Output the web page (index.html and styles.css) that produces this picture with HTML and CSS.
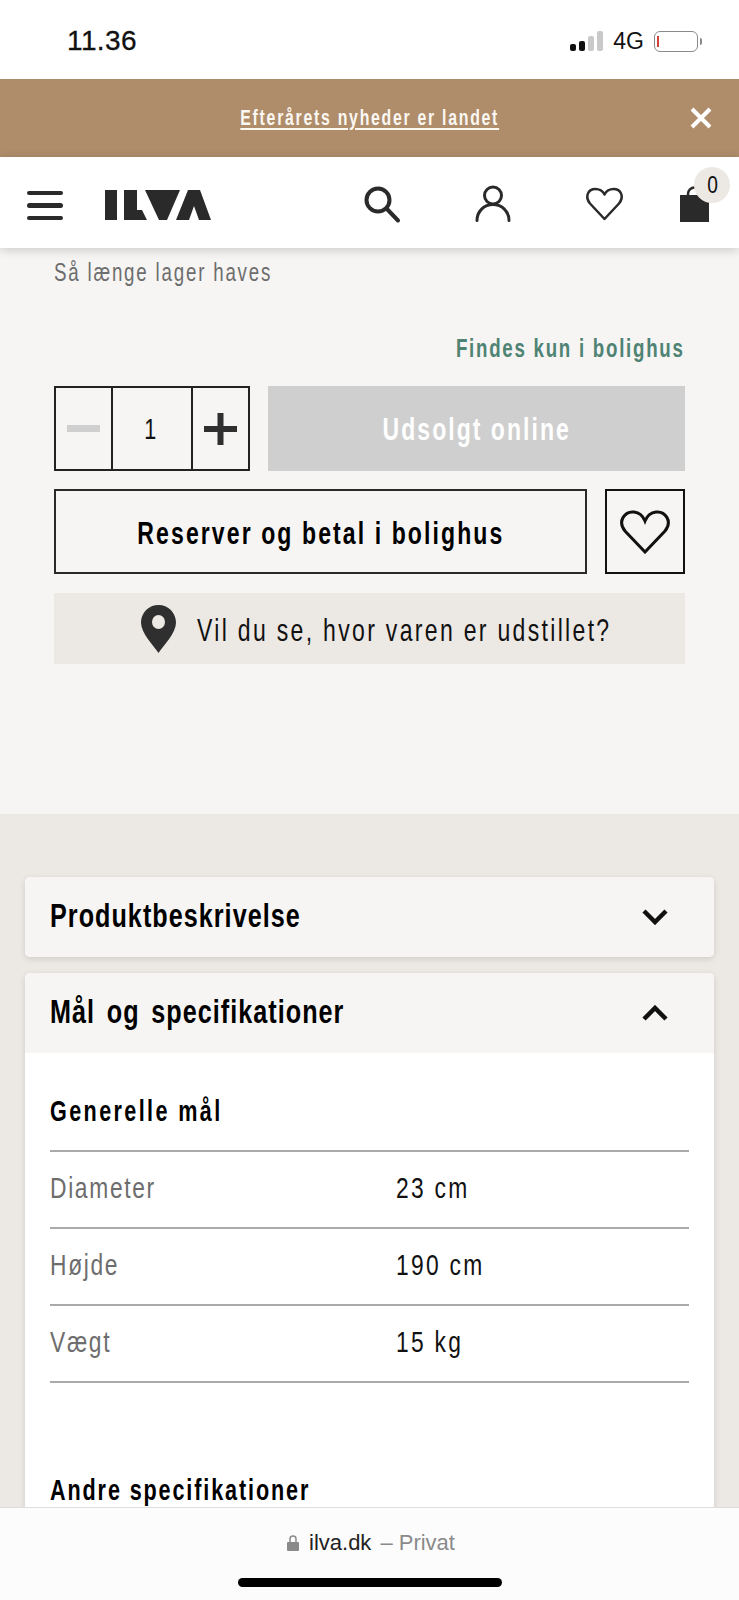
FILE: index.html
```html
<!DOCTYPE html>
<html lang="da">
<head>
<meta charset="utf-8">
<title>ILVA</title>
<link rel="stylesheet" href="styles.css">
</head>
<body>
<div class="page">
  <div class="status">
    <span class="time">11.36</span>
    <div class="status-right">
      <div class="signal"><i class="b1"></i><i class="b2"></i><i class="b3"></i><i class="b4"></i></div>
      <span class="net">4G</span>
      <div class="battery"><i class="level"></i></div>
      <i class="nub"></i>
    </div>
  </div>
  <div class="banner">
    <a class="banner-link cond">Efterårets nyheder er landet</a>
    <svg class="banner-close" viewBox="0 0 22 22"><path d="M2 2 20 20M20 2 2 20"/></svg>
  </div>
  <header class="header">
    <div class="burger"><i></i><i></i><i></i></div>
    <svg class="logo" viewBox="0 0 107 30"><path d="M0 0h12v30H0zM19 0h13v20h5l5 10H19zM40 0h35L62 30H54zM83 0h12l11 30H94L89 16 84 30H71z"/></svg>
    <div class="header-icons">
      <svg class="ic ic-search" viewBox="0 0 44 44"><circle cx="19" cy="18" r="11.500"/><path d="M27.500 26.500 39 38.500"/></svg>
      <svg class="ic ic-user" viewBox="0 0 44 44"><circle cx="22" cy="13.500" r="8.500"/><path d="M6 38.500c0-9 7-16 16-16s16 7 16 16"/></svg>
      <svg class="ic ic-heart" viewBox="0 0 44 44"><path d="M21.500 37 7 21.500C1.500 14.500 5 7 12.500 7c3.500 0 7.500 2 9 5.500C23 9 27 7 30.500 7 38 7 41.500 14.500 36 21.500z"/></svg>
      <div class="cart">
        <svg class="bag" viewBox="0 0 29 36"><path d="M0 9h29v27H0z"/><path class="bag-handle" d="M8 10V8a6.500 6.500 0 0 1 13 0v2"/></svg>
        <span class="badge"><span class="badge-num">0</span></span>
      </div>
    </div>
  </header>
  <main class="product">
    <p class="stock"><span class="cond cond-l">Så længe lager haves</span></p>
    <p class="only"><span class="cond cond-r">Findes kun i bolighus</span></p>
    <div class="row">
      <div class="qty">
        <div class="qty-btn qty-minus"><i></i></div>
        <div class="qty-val"><span class="cond">1</span></div>
        <div class="qty-btn qty-plus"><svg viewBox="0 0 33 32"><path d="M13.500 0h6v13h13.500v6H19.500v13h-6V19H0v-6h13.500z"/></svg></div>
      </div>
      <div class="soldout"><span class="cond">Udsolgt online</span></div>
    </div>
    <div class="row">
      <div class="reserve"><span class="cond">Reserver og betal i bolighus</span></div>
      <div class="wish"><svg viewBox="0 0 50 44"><path d="M25 42 5 21C-3 11 5 1 14 2c5 .500 9 4 11 9 2-5 6-8.500 11-9 9-1 17 9 9 19z"/></svg></div>
    </div>
    <div class="where">
      <svg class="pin" viewBox="0 0 35 48"><path fill-rule="evenodd" d="M17.500 0C7.800 0 0 7.800 0 17.500 0 28 12 40 17.500 48 23 40 35 28 35 17.500 35 7.800 27.200 0 17.500 0zm0 10a6.500 7 0 1 1 0 14 6.500 7 0 1 1 0-14z"/></svg>
      <span class="cond cond-l">Vil du se, hvor varen er udstillet?</span>
    </div>
  </main>
  <section class="details">
    <div class="card">
      <div class="card-head">
        <h2><span class="cond-h">Produktbeskrivelse</span></h2>
        <svg class="chev" viewBox="0 0 26 16"><path d="M2 2 13 13 24 2"/></svg>
      </div>
    </div>
    <div class="card">
      <div class="card-head">
        <h2><span class="cond-h">Mål og specifikationer</span></h2>
        <svg class="chev" viewBox="0 0 26 16"><path d="M2 14 13 3 24 14"/></svg>
      </div>
      <div class="card-body">
        <h3><span class="cond cond-l">Generelle mål</span></h3>
        <div class="spec"><span class="k cond-s">Diameter</span><span class="v cond-s">23 cm</span></div>
        <div class="spec"><span class="k cond-s">Højde</span><span class="v cond-s">190 cm</span></div>
        <div class="spec"><span class="k cond-s">Vægt</span><span class="v cond-s">15 kg</span></div>
        <h3 class="second"><span class="cond cond-l">Andre specifikationer</span></h3>
      </div>
    </div>
  </section>
  <div class="safari">
    <div class="address">
      <svg class="lock" viewBox="0 0 12 16"><path d="M1 7h10a1 1 0 0 1 1 1v7a1 1 0 0 1-1 1H1a1 1 0 0 1-1-1V8a1 1 0 0 1 1-1z"/><path class="shackle" d="M3 7V4a3 3 0 0 1 6 0v3"/></svg>
      <span class="host">ilva.dk</span>
      <span class="priv">– Privat</span>
    </div>
    <div class="home"></div>
  </div>
</div>
</body>
</html>
```
FILE: styles.css
```css
* { box-sizing: border-box; }
html, body { margin: 0; padding: 0; }
body { background: #f6f5f3; }
.page {
  position: relative; width: 739px; height: 1600px; overflow: hidden;
  font-family: "Liberation Sans", Arial, sans-serif;
  color: #111; background: #f6f5f3;
}
p, h2, h3 { margin: 0; }

/* The reference face is a condensed grotesque; squeeze the metric-compatible sans to match. */
.cond { display: inline-block; white-space: nowrap; transform: scaleX(.72); }
.cond-l { transform-origin: left center; }
.cond-r { transform-origin: right center; }
.cond-s { display: inline-block; white-space: nowrap; transform: scaleX(.76); transform-origin: left center; }
.cond-h { display: inline-block; white-space: nowrap; transform: scaleX(.74); transform-origin: left center; }

.status { height: 79px; background: #fff; display: flex; align-items: center; padding: 3px 37px 0 67px; justify-content: space-between; }
.time { font-size: 28px; letter-spacing: .4px; -webkit-text-stroke: .3px #111; }
.status-right { display: flex; align-items: center; }
.signal { display: flex; align-items: flex-end; gap: 3px; height: 20px; margin-right: 10px; }
.signal i { display: block; width: 6px; border-radius: 2px; background: #c9c9c9; }
.signal .b1 { height: 7px; background: #111; }
.signal .b2 { height: 10px; background: #111; }
.signal .b3 { height: 15px; }
.signal .b4 { height: 20px; }
.net { font-size: 23px; margin-right: 10px; }
.battery { width: 44px; height: 21px; border: 1.500px solid #8a8a8a; border-radius: 6px; padding: 4px 2px; }
.level { display: block; width: 2px; height: 100%; background: #d0423c; }
.nub { display: block; width: 2px; height: 7px; background: #888; margin-left: 2px; border-radius: 0 2px 2px 0; }

.banner { height: 78px; background: #af8d6b; display: flex; align-items: center; justify-content: center; position: relative; }
.banner-link { color: #fbf7f2; font-size: 22px; font-weight: 700; letter-spacing: 2.400px; text-decoration: underline; text-underline-offset: 3px; }
.banner-close { position: absolute; right: 27px; top: 28px; width: 22px; height: 22px; fill: none; stroke: #fff; stroke-width: 4; }

.header { position: relative; z-index: 2; height: 91px; background: #fff; box-shadow: 0 2px 10px rgba(0,0,0,.18); display: flex; align-items: center; padding-left: 27px; }
.burger { width: 36px; display: flex; flex-direction: column; gap: 8px; margin-top: 6px; }
.burger i { display: block; height: 4.500px; border-radius: 3px; background: #2a2a2a; }
.logo { width: 107px; height: 30px; margin: 5px 0 0 42px; fill: #2a2a2a; }
.header-icons { display: flex; align-items: center; margin-left: 146.500px; gap: 68px; margin-top: 2px; }
.ic { width: 44px; height: 44px; fill: none; stroke: #2a2a2a; stroke-width: 3; stroke-linecap: round; stroke-linejoin: round; }
.ic-search { stroke-width: 4; }
.ic-heart { stroke-width: 2.500; }
.cart { position: relative; width: 29px; height: 36px; margin-left: -14.500px; }
.bag { width: 29px; height: 36px; fill: #2a2a2a; display: block; }
.bag-handle { fill: none; stroke: #2a2a2a; stroke-width: 2.500; }
.badge { position: absolute; left: 14px; top: -18.500px; width: 36px; height: 36px; border-radius: 50%; background: #ece8e4; display: flex; align-items: center; justify-content: center; font-size: 24px; }
.badge-num { display: inline-block; transform: scaleX(.8); margin-left: 2px; }

.product { height: 566px; padding: 9px 54px 0; }
.stock { font-size: 26px; line-height: 30px; letter-spacing: 2.500px; color: #6d6d6d; }
.only { font-size: 26px; line-height: 30px; letter-spacing: 2.400px; font-weight: 700; color: #4f8374; text-align: right; margin-top: 46px; margin-bottom: 23px; }
.row { display: flex; gap: 18px; height: 85px; margin-bottom: 18px; }
.row + .row { margin-bottom: 19px; }
.qty { width: 196px; display: flex; border: 2px solid #222; }
.qty-btn { width: 55px; display: flex; align-items: center; justify-content: center; }
.qty-minus i { display: block; width: 33px; height: 7px; background: #cfcfcf; }
.qty-plus svg { width: 33px; height: 32px; fill: #2f2f2f; }
.qty-val { flex: 1; border: solid #222; border-width: 0 2px; display: flex; align-items: center; justify-content: center; font-size: 30px; padding-right: 3px; }
.soldout { flex: 1; background: #cfcfcf; color: #fff; font-size: 32px; font-weight: 700; letter-spacing: 2.800px; display: flex; align-items: center; justify-content: center; padding-top: 1px; }
.reserve { flex: 1; border: 2px solid #2a2a2a; display: flex; align-items: center; justify-content: center; font-size: 32px; font-weight: 700; letter-spacing: 2.900px; padding-top: 3px; color: #000; }
.wish { width: 80px; border: 2px solid #111; display: flex; align-items: center; justify-content: center; }
.wish svg { width: 50px; height: 44px; fill: none; stroke: #111; stroke-width: 3; }
.where { height: 71px; background: #ece8e4; display: flex; align-items: center; gap: 21px; padding-left: 87px; font-size: 32px; letter-spacing: 3.200px; }
.where .cond { padding-top: 3px; }
.pin { width: 35px; height: 48px; fill: #2f2f2f; flex: none; }

.details { height: 786px; background: #ece8e4; padding: 63px 25px 0; }
.card { background: #fff; border-radius: 5px; margin-bottom: 16px; box-shadow: 0 2px 6px rgba(0,0,0,.12); overflow: hidden; }
.card-head { height: 80px; background: #f6f5f3; display: flex; align-items: center; justify-content: space-between; padding: 0 46px 0 25px; }
.card-head h2 { font-size: 34px; font-weight: 700; letter-spacing: 1.400px; word-spacing: 5px; color: #000; padding-bottom: 3px; }
.chev { width: 26px; height: 16px; fill: none; stroke: #111; stroke-width: 4.500; }
.card-body { padding: 40px 25px 0; height: 600px; }
.card-body h3 { font-size: 30px; line-height: 36px; font-weight: 700; letter-spacing: 3.300px; height: 59px; border-bottom: 2px solid #aaa; color: #000; }
.card-body h3.second { border: 0; margin-top: 89px; letter-spacing: 2.600px; }
.spec { display: flex; height: 77px; padding-bottom: 4px; align-items: center; border-bottom: 2px solid #aaa; font-size: 30px; letter-spacing: 2.200px; }
.k { width: 346px; color: #6d6d6d; }
.v { letter-spacing: 3px; }

.safari { position: absolute; left: 0; right: 0; bottom: 0; height: 93px; background: #fcfcfc; border-top: 1px solid #ddd; }
.address { display: flex; align-items: center; justify-content: center; height: 70px; font-size: 22px; color: #222; padding-left: 3px; }
.lock { width: 12px; height: 16px; fill: #8a8a8a; margin-right: 10px; }
.shackle { fill: none; stroke: #8a8a8a; stroke-width: 1.500; }
.priv { color: #8a8a8a; margin-left: 9px; }
.home { width: 264px; height: 9px; border-radius: 5px; background: #000; margin: 0 auto; }
```
